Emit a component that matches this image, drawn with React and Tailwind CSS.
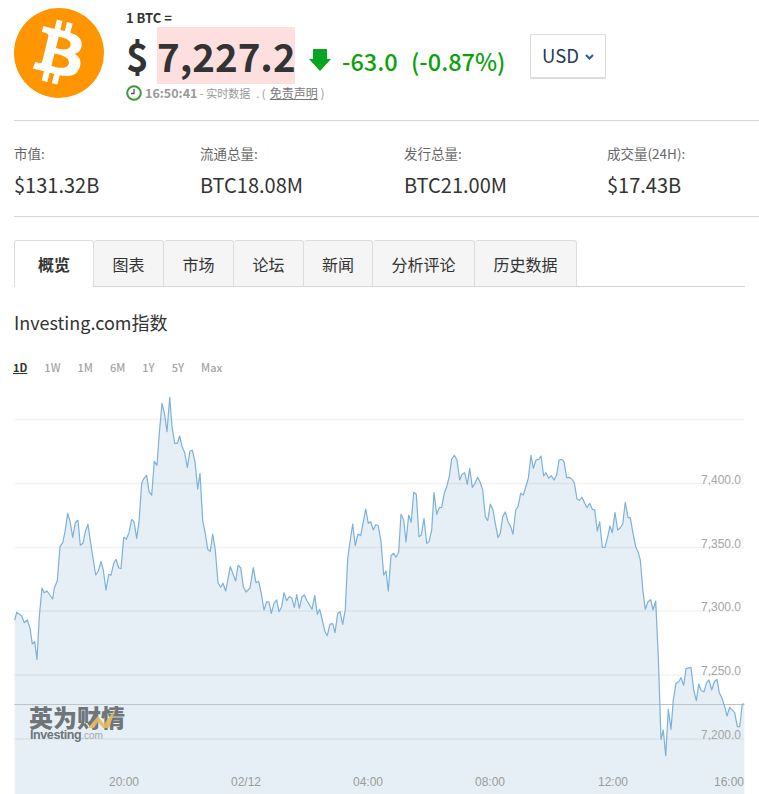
const sans = "font-['Noto_Sans_CJK_SC',sans-serif]";

const tabs = ["概览", "图表", "市场", "论坛", "新闻", "分析评论", "历史数据"];
const tabWidths = ["w-[80px]", "w-[70px]", "w-[70px]", "w-[70px]", "w-[69px]", "w-[102px]", "w-[102px]"];

const stats = [
  { label: "市值:", value: "$131.32B", width: "w-[186px]" },
  { label: "流通总量:", value: "BTC18.08M", width: "w-[204px]" },
  { label: "发行总量:", value: "BTC21.00M", width: "w-[203px]" },
  { label: "成交量(24H):", value: "$17.43B", width: "w-[150px]" },
];

const ranges = ["1D", "1W", "1M", "6M", "1Y", "5Y", "Max"];

// traced from the reference, page coordinates
const line = [
  [14.7,620],[16.7,612.3],[21.7,616],[24.3,622.7],[27.3,620],[30,628],[32.3,644],[34.7,641.7],[37,659.3],[39.3,616.7],[42,588],[44.3,592.7],[47,591],[52.7,599],[54.3,588],
  [57.3,580.7],[60,546.7],[62.7,542.7],[65,531.7],[67.7,513.3],[70,521],[72.7,537.3],[75.3,522.7],[78,520.3],[80.3,545.3],[83,543.3],[85.3,531.7],[88,524.3],[90.7,543.3],[93.3,560],[95.7,575],[98.3,571],[101,561.7],[103.3,570],[106,590],[108.7,574.3],[111,575.3],[113.7,563.3],[116,559.3],[118.7,567.7],[121,568.7],[123.7,537.3],[126.3,539.3],[129,532.7],[131.7,519.3],[134,521.7],[136.7,538.3],[139,521.7],[141.7,483.3],[144,478.3],[146.7,475.3],[149,491.7],[151.7,495],[154.3,461.3],[157,465.3],[159.3,433.3],[162,403.3],[164.3,412.7],[167,431.7],[169.7,397.3],[172,426.7],[174.7,443.3],[177.3,443.3],[179.7,436],[182.3,447.3],[184.7,452.7],[187.3,467.3],[190,451],[192.3,450.3],[195,461.7],[197.7,489],[200,473.3],[202.7,520.7],[205.3,533.3],[207.7,549.3],[210.3,551.3],[212.7,534],[215.3,550],[218,582.7],[220.7,587.3],[223,583.3],[225.7,591],[230.3,566.7],[235.7,581],[238,565.3],[240.7,567.7],[243.3,586.7],[246,592],[250,588],[253.3,567.7],[256,582.7],[258.7,581.3],
  [261.3,593.3],[264,610],[266.7,601.7],[269,602],[271.3,613.3],[274,603.3],[276.7,600],[279,611.7],[281.7,606.7],[284,592.7],[286.7,600.7],[289.3,596.7],[291.7,597.7],[294.3,607.3],[296.7,594.7],[299.3,608.3],[302,596.7],[304.3,595],[307,600.7],[312,609.3],[314.7,595.3],[317.3,614.3],[319.7,609.3],[322.3,620],[325,631.7],[327.3,635.7],[330,624],[332.7,623.7],[335,632.7],[337.7,613.3],[340,611.7],[342.7,624.3],[345.3,609.3],[347.7,558.3],[350.3,540],[352.7,524],[355.3,545.7],[358,534],[360.7,535.7],[363,523.3],[365.7,509],[368.3,523.3],[370.7,521.7],[373.3,530],[375.7,524.7],[378.3,525.7],[381,541.7],[383.7,575],[386,571],[388.3,591],[391,555.7],[393.7,553.3],[396,557.3],[398.7,551.7],[401,514.3],[403.7,520],[406,542],[408.7,515],[411.3,522.3],[413.7,492.3],[416.3,494.3],[419,536.7],[421.3,535],[424,518.3],[426.7,543.3],[429,541.7],[431.7,530],[434,492.7],[436.7,514.3],[439.3,507.7],[441.7,507.3],[444.3,493.3],[446.7,486.7],[449.3,476.7],[451.7,459],[454.3,455.3],[457,460],[459.7,480],[462,474.3],[464.7,472.7],[467.3,484.3],[469.7,468.3],[472.3,487.3],[475,483.3],[477.7,477.3],[480,481.7],[482.7,490],[485.3,516.7],[487.7,520.7],[490.3,504],[493,510],[495.3,523.3],[498,537.7],[500.3,533.3],
  [502.7,516.7],[505.3,512],[508,521.7],[510.7,526.7],[513,534.3],[515.7,510],[518,506.7],[520.7,493.3],[523.3,495],[528.3,478.3],[531,455.3],[533.3,468.3],[536,460],[538.7,459.3],[541,456],[543.7,476],[546,472.7],[548.7,478.3],[551.3,475.7],[554,480],[556.7,475],[559,460],[561.7,459.3],[564,461.7],[566.7,477.7],[569.3,477.3],[571.7,479],[574.3,482.7],[577,499],[579.3,500.3],[582,497.3],[584.7,503.3],[587,507.7],[589.7,503.3],[592.3,509.3],[594.7,510],[597.3,531],[599.7,521.7],[602.3,547.3],[605,547.3],[607.3,538.3],[610,526],[612.3,532.7],[615,512.7],[617.7,530],[620,528.3],[622.7,524],[625.3,502.3],[628,517.7],[630.3,517.7],[633,533.3],[635.7,546.7],[638,551.7],[640.3,560],[643,591.7],[645.3,609.3],[648,601.7],[650.7,599.7],[653,610],[655.7,601],[658.3,656.7],[661,739.3],[663.3,730],[665.7,755.7],[668.3,709.3],[671,729.3],[673.3,700],[676,683.3],[678.7,681.7],[681,677.7],[683.7,685.3],[686,668.7],[691,667.3],[693.7,690],[696.3,700.7],[698.7,684.3],[701.3,690.7],[704,691.7],[706.7,682.3],[709,680],[711.7,690],[714.3,681.7],[717,679.3],[719.3,692.7],[722,698.3],[724.7,706.7],[727,716],[729.7,707.3],[734.7,712.7],[737.3,726.7],[739.7,726.7],[742.3,704],[744.3,704],
];

const points = line.map((p) => p.join(",")).join(" ");
const area = `14.7,794 ${points} 744.3,794`;

const grid = [
  { y: 419.5 },
  { y: 483.5, label: "7,400.0" },
  { y: 547.5, label: "7,350.0" },
  { y: 611, label: "7,300.0" },
  { y: 675, label: "7,250.0" },
  { y: 739, label: "7,200.0" },
];

const times = [
  { x: 124, t: "20:00" },
  { x: 246, t: "02/12" },
  { x: 368, t: "04:00" },
  { x: 490, t: "08:00" },
  { x: 613, t: "12:00" },
  { x: 729, t: "16:00" },
];

function BitcoinLogo() {
  return (
    <svg className="mt-[8px] w-[90px] h-[90px] shrink-0" viewBox="0 0 64 64">
      <circle cx="32" cy="32" r="32" fill="#ff9500" />
      <g transform="translate(32 32) scale(1.14) translate(-32 -32)">
        <path
          fill="#fff"
          d="M46.11 27.441c.636-4.258-2.606-6.547-7.039-8.074l1.438-5.768-3.512-.875-1.4 5.616c-.922-.23-1.87-.447-2.812-.662l1.41-5.653-3.509-.875-1.439 5.766c-.764-.174-1.514-.346-2.242-.527l.004-.018-4.842-1.209-.934 3.75s2.605.597 2.55.634c1.422.355 1.68 1.296 1.636 2.042l-1.638 6.571c.098.025.225.061.365.117l-.37-.092-2.297 9.205c-.174.432-.615 1.08-1.609.834.035.051-2.552-.637-2.552-.637l-1.743 4.02 4.57 1.139c.85.213 1.683.436 2.502.646l-1.453 5.835 3.507.875 1.44-5.772c.957.26 1.887.5 2.797.726L27.504 50.8l3.511.875 1.453-5.823c5.987 1.133 10.49.676 12.383-4.738 1.527-4.36-.075-6.875-3.225-8.516 2.294-.531 4.022-2.04 4.483-5.157zM38.087 38.69c-1.086 4.36-8.426 2.004-10.807 1.412l1.928-7.729c2.38.594 10.011 1.77 8.88 6.317zm1.085-11.312c-.99 3.966-7.1 1.951-9.083 1.457l1.748-7.01c1.983.494 8.367 1.416 7.335 5.553z"
        />
      </g>
    </svg>
  );
}

function Chart() {
  return (
    <svg className="block w-[759px] h-[406px] mt-[12px]" viewBox="0 388 759 406">
      <polygon points={area} fill="#e6eff5" />
      {grid.map((g) => (
        <line key={g.y} x1="14.7" x2="744.3" y1={g.y} y2={g.y} stroke="#000" strokeOpacity="0.05" strokeWidth="1.5" />
      ))}
      <line x1="14.7" x2="744.3" y1="704.5" y2="704.5" stroke="#bfc3c6" strokeWidth="1" />
      <polyline points={points} fill="none" stroke="#7cb1dc" strokeWidth="1.2" strokeLinejoin="round" />

      {/* watermark */}
      <text x="29" y="727" fill="#6f7579" fontSize="24" fontWeight="900" fontFamily="'Noto Sans CJK SC', sans-serif">
        英为财情
      </text>
      <path d="M88 728 L98 716 L104 724 L116 708 L109 728 L103 728 L98 722 L94 728 Z" fill="#e8b95a" opacity="0.9" />
      <text x="30" y="739" fill="#6f7579" fontSize="12.5" fontWeight="700" fontFamily="'Liberation Sans', sans-serif" letterSpacing="-0.4">
        Investing
        <tspan fontWeight="400" fontSize="10" fill="#a3a9ad" letterSpacing="0">.com</tspan>
      </text>

      {grid.filter((g) => g.label).map((g) => (
        <text key={g.label} x="741" y={g.y} textAnchor="end" fill="#a5a5a5" fontSize="12" fontFamily="'Liberation Sans', sans-serif">
          {g.label}
        </text>
      ))}
      {times.map((t) => (
        <text key={t.t} x={t.x} y="786" textAnchor="middle" fill="#9b9b9b" fontSize="12" fontFamily="'Liberation Sans', sans-serif">
          {t.t}
        </text>
      ))}
    </svg>
  );
}

export default function App() {
  return (
    <div className={`w-[759px] h-[794px] overflow-hidden bg-white text-[#333] ${sans}`}>
      {/* Header */}
      <div className="flex h-[121px] border-b border-[#d4d4d4] ml-[14px]">
        <BitcoinLogo />
        <div className="ml-[22px] w-[404px] flex flex-col">
          <div className="mt-[9px] h-[18px] text-[13px] leading-[18px] font-bold">1 BTC =</div>
          <div className="flex items-center h-[57px]">
            <span className="text-[38.5px] font-bold leading-none w-[31px]">$</span>
            <span className="bg-[#fddfdf] h-[57px] w-[138px] text-center text-[38.5px] leading-[57px] font-bold">7,227.2</span>
            <svg className="ml-[14px] w-[22px] h-[22px] mt-[9px]" viewBox="0 0 22 22">
              <path d="M4 0h14v10h4L11 22 0 10h4z" fill="#08a520" />
            </svg>
            <div className="ml-[11px] mt-[13px] flex gap-[14px] text-[23.5px] leading-none font-medium text-[#0ca10c] whitespace-pre">
              <span className="w-[55px]">-63.0</span>
              <span>(-0.87%)</span>
            </div>
          </div>
          <div className="flex items-center h-[18px] text-[11px] text-[#999] whitespace-pre">
            <svg className="w-[16px] h-[16px]" viewBox="0 0 16 16">
              <circle cx="8" cy="8" r="6.8" fill="none" stroke="#3e9c35" strokeWidth="2" />
              <path d="M8 4v4.5h-3" fill="none" stroke="#555" strokeWidth="1.3" />
            </svg>
            <span className="ml-[3px] text-[12.5px] font-bold">16:50:41</span>
            <span> - 实时数据</span>
            <span className="ml-[6px]">. ( </span>
            <span className="ml-[2px] text-[12px] underline text-[#777]">免责声明</span>
            <span className="text-[12px]"> )</span>
          </div>
        </div>
        <div className="mt-[34px] w-[76px] h-[45px] border border-b-2 border-[#ddd] flex items-center justify-center gap-[6px] text-[18.5px] text-[#2a3a55]">
          USD
          <svg className="w-[9px] h-[6px] mt-[2px]" viewBox="0 0 9 6">
            <path d="M1 1l3.5 3.5L8 1" fill="none" stroke="#2a5d97" strokeWidth="2" />
          </svg>
        </div>
      </div>

      {/* Stats */}
      <div className="flex h-[96px] border-b border-[#d4d4d4] ml-[14px] pt-[22px]">
        {stats.map((s) => (
          <div key={s.label} className={s.width}>
            <div className="text-[13.5px] leading-[20px] text-[#666]">{s.label}</div>
            <div className="mt-[9px] text-[20px] leading-[26px] text-[#333]">{s.value}</div>
          </div>
        ))}
      </div>

      {/* Tabs */}
      <div className="flex mt-[23px] ml-[14px] w-[731px] h-[47px] border-b border-[#d4d4d4]">
        {tabs.map((t, i) => (
          <div
            key={t}
            className={`${tabWidths[i]} flex items-center justify-center border border-[#ddd] rounded-t-[3px] text-[16px] ${
              i === 0 ? "bg-white font-bold border-b-0 h-[47px]" : "bg-[#f5f5f5] border-l-0 border-b-0 h-[46px]"
            }`}
          >
            {t}
          </div>
        ))}
      </div>

      {/* Title */}
      <h2 className="ml-[14px] mt-[20px] text-[18px] leading-[30px] font-normal">Investing.com指数</h2>

      {/* Range buttons */}
      <div className="flex ml-[13px] mt-[21px] h-[18px] items-center gap-[17px] text-[11px] font-medium text-[#a5a5a5]">
        {ranges.map((r, i) => (
          <span key={r} className={i === 0 ? "font-bold text-[#333] underline" : ""}>
            {r}
          </span>
        ))}
      </div>

      <Chart />
    </div>
  );
}
